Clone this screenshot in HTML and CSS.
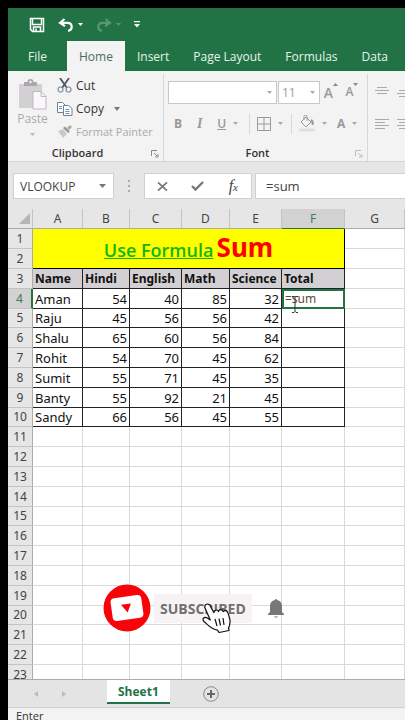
FILE: index.html
```html
<!DOCTYPE html>
<html lang="en">
<head>
  <meta charset="UTF-8">
  <meta name="viewport" content="width=device-width, initial-scale=1.0">
  <title>Sheet1</title>
  <link rel="stylesheet" href="styles.css">
</head>
<body>
  <div class="app">
    <header class="title-bar">
      <button class="quick" aria-label="Save">
        <svg width="16" height="16" viewBox="0 0 16 16" fill="none" stroke="#fff" stroke-width="1.5"><path d="M1.5 1.5h13v13h-11l-2-2z"/><path d="M3.5 2v5.500h9V2M4.500 14v-4h7v4"/><path d="M7 11.500v2.500"/></svg>
      </button>
      <button class="quick" aria-label="Undo">
        <svg width="16" height="14" viewBox="0 0 16 14" fill="none" stroke="#fff" stroke-width="2.2"><path d="M6.500 1L2 4.800l5 3.400M2.500 4.800h7c5.500 0 5.500 7 .5 8"/></svg>
        <svg class="caret" width="5" height="3" viewBox="0 0 5 3" fill="#fff"><path d="M0 0h5L2.500 3z"/></svg>
      </button>
      <button class="quick faded" aria-label="Redo">
        <svg width="16" height="14" viewBox="0 0 16 14" fill="none" stroke="#fff" stroke-width="2.2"><path d="M9.500 1L14 4.800l-5 3.400M13.500 4.800h-7c-5.500 0-5.500 7-.5 8"/></svg>
        <svg class="caret" width="5" height="3" viewBox="0 0 5 3" fill="#fff"><path d="M0 0h5L2.500 3z"/></svg>
      </button>
      <button class="quick" aria-label="Customize toolbar">
        <svg width="6" height="7" viewBox="0 0 6 7" fill="#fff"><path d="M0 0h6v1.200H0zM0 3h6L3 6.500z"/></svg>
      </button>
    </header>

    <nav class="tabs">
      <button class="tab file">File</button>
      <button class="tab active">Home</button>
      <button class="tab">Insert</button>
      <button class="tab">Page Layout</button>
      <button class="tab">Formulas</button>
      <button class="tab">Data</button>
    </nav>

    <section class="ribbon">
      <div class="group clipboard">
        <div class="group-body">
          <button class="paste">
            <svg width="30" height="31" viewBox="0 0 30 31"><path d="M1 5h23v24H1z" fill="#d3d0d3"/><path d="M6 3h3.500a3 3 0 0 1 6 0H19v4H6z" fill="#aaa7aa"/><circle cx="12.500" cy="3" r="1.200" fill="#f3f3f3"/><path d="M15 12.500h8l5 5V30H15z" fill="#fbf8fb" stroke="#bdb9bd"/><path d="M23 12.500v5h5" fill="none" stroke="#bdb9bd"/></svg>
            <span>Paste</span>
            <svg width="5" height="3" viewBox="0 0 5 3" fill="#bbb"><path d="M0 0h5L2.500 3z"/></svg>
          </button>
          <div class="clip-list">
            <button class="clip">
              <svg width="16" height="15" viewBox="0 0 16 15" fill="none"><path d="M3 0l7 10M12 0L5 10" stroke="#555" stroke-width="1.8"/><circle cx="3.500" cy="11.500" r="2.500" stroke="#7990a8" stroke-width="1.2"/><circle cx="11.500" cy="11.500" r="2.500" stroke="#7990a8" stroke-width="1.2"/></svg>
              <span>Cut</span>
            </button>
            <button class="clip">
              <svg width="16" height="15" viewBox="0 0 16 15" fill="#fff" stroke="#71808f"><path d="M.5 1.500h5l3 3v7h-8z"/><path d="M6.500 4.500h5l3.500 3v7H6.500z"/><path d="M2 5.500h3M2 7.500h3M8.500 8.500h4M8.500 10.500h4M8.500 12.500h4" stroke="#6a8fb5"/></svg>
              <span>Copy</span>
              <svg class="after" width="6" height="4" viewBox="0 0 6 4" fill="#777"><path d="M0 0h6L3 4z"/></svg>
            </button>
            <button class="clip off">
              <svg width="16" height="15" viewBox="0 0 16 15"><path d="M1 7l5-2 4 5-4 4z" fill="#cbc9cb"/><path d="M6 4l2-1.500 5 5L11 9z" fill="#999"/><path d="M10 4l3-3 2 2-3 3z" fill="#aaa"/></svg>
              <span>Format Painter</span>
            </button>
          </div>
        </div>
        <div class="group-label">Clipboard
          <svg class="launcher" width="8" height="8" viewBox="0 0 8 8" fill="none" stroke="#888"><path d="M.5 6V.5H6M3 3l3 3M7 4v3H4"/></svg>
        </div>
      </div>

      <div class="group font">
        <div class="group-body rows">
          <div class="tools boxes">
            <span class="pick wide">
              <select aria-label="Font name"><option></option></select>
              <svg width="5" height="3" viewBox="0 0 5 3" fill="#aaa"><path d="M0 0h5L2.500 3z"/></svg>
            </span>
            <span class="pick">
              <select aria-label="Font size"><option>11</option></select>
              <svg width="5" height="3" viewBox="0 0 5 3" fill="#aaa"><path d="M0 0h5L2.500 3z"/></svg>
            </span>
            <button class="tool" aria-label="Increase font size"><span class="grow">A</span><svg width="5" height="3" viewBox="0 0 5 3" fill="#888"><path d="M0 3h5L2.500 0z"/></svg></button>
            <button class="tool" aria-label="Decrease font size"><span>A</span><svg width="5" height="3" viewBox="0 0 5 3" fill="#888"><path d="M0 0h5L2.500 3z"/></svg></button>
          </div>
          <div class="tools">
            <button class="tool"><b>B</b></button>
            <button class="tool"><i>I</i></button>
            <button class="tool split"><u>U</u><svg width="5" height="3" viewBox="0 0 5 3" fill="#aaa"><path d="M0 0h5L2.500 3z"/></svg></button>
            <span class="rule"></span>
            <button class="tool split" aria-label="Borders"><svg width="14" height="14" viewBox="0 0 14 14" fill="none" stroke="#999"><path d="M.5.5h13v13H.5zM7 0v14M0 7h14"/></svg><svg width="5" height="3" viewBox="0 0 5 3" fill="#aaa"><path d="M0 0h5L2.500 3z"/></svg></button>
            <span class="rule"></span>
            <button class="tool split" aria-label="Fill color"><svg width="16" height="17" viewBox="0 0 16 17" fill="none" stroke="#999"><path d="M2 7l5-5 5 5-5 5zM5 5V1.500a1.500 1.500 0 0 1 3 0V6"/><path d="M12 5c2 1 2 3 1.500 5" stroke-width="2"/><path d="M0 15h16" stroke="#e3dfe1" stroke-width="3"/></svg><svg width="5" height="3" viewBox="0 0 5 3" fill="#aaa"><path d="M0 0h5L2.500 3z"/></svg></button>
            <button class="tool split" aria-label="Font color"><b>A</b><svg width="5" height="3" viewBox="0 0 5 3" fill="#aaa"><path d="M0 0h5L2.500 3z"/></svg></button>
          </div>
        </div>
        <div class="group-label">Font
          <svg class="launcher" width="8" height="8" viewBox="0 0 8 8" fill="none" stroke="#bbb"><path d="M.5 6V.5H6M3 3l3 3M7 4v3H4"/></svg>
        </div>
      </div>

      <div class="group align">
        <div class="group-body rows">
          <div class="tools">
            <button class="tool" aria-label="Top align"><svg width="14" height="14" viewBox="0 0 14 14" stroke="#aaa"><path d="M2 1.500h10M0 4.500h14M2 7.500h10"/></svg></button>
            <button class="tool" aria-label="Middle align"><svg width="14" height="14" viewBox="0 0 14 14" stroke="#aaa"><path d="M2 4.500h10M0 7.500h14M2 10.500h10"/></svg></button>
          </div>
          <div class="tools">
            <button class="tool" aria-label="Align left"><svg width="14" height="14" viewBox="0 0 14 14" stroke="#aaa"><path d="M0 2.500h14M0 5.500h10M0 8.500h14M0 11.500h10"/></svg></button>
            <button class="tool" aria-label="Center"><svg width="14" height="14" viewBox="0 0 14 14" stroke="#aaa"><path d="M0 2.500h14M2 5.500h10M0 8.500h14M2 11.500h10"/></svg></button>
          </div>
        </div>
      </div>
    </section>

    <section class="formula-bar">
      <div class="name-box">
        <input type="text" value="VLOOKUP" aria-label="Name box">
        <svg width="7" height="4" viewBox="0 0 7 4" fill="#777"><path d="M0 0h7L3.500 4z"/></svg>
      </div>
      <svg class="grip" width="2" height="12" viewBox="0 0 2 12" fill="#aaa"><path d="M0 0h2v2H0zM0 5h2v2H0zM0 10h2v2H0z"/></svg>
      <div class="entry">
        <button aria-label="Cancel"><svg width="11" height="9" viewBox="0 0 12 10" fill="none" stroke="#777" stroke-width="2"><path d="M1 .5l10 9M11 .5l-10 9"/></svg></button>
        <button aria-label="Enter"><svg width="13" height="10" viewBox="0 0 13 10" fill="none" stroke="#777" stroke-width="2.400"><path d="M1 5l3.500 3.500L12 1"/></svg></button>
        <button aria-label="Insert function"><i class="fx">f<small>x</small></i></button>
      </div>
      <input class="formula" type="text" value="=sum" aria-label="Formula">
    </section>

    <main class="sheet">
      <table id="grid">
        <colgroup>
          <col class="col-num"><col class="col-a"><col class="col-b"><col class="col-c"><col class="col-d"><col class="col-e"><col class="col-f"><col>
        </colgroup>
        <thead>
          <tr>
            <th class="corner"><svg width="11" height="11" viewBox="0 0 11 11" fill="#b5b5b5"><path d="M11 0v11H0z"/></svg></th>
            <th>A</th><th>B</th><th>C</th><th>D</th><th>E</th><th class="picked">F</th><th>G</th>
          </tr>
        </thead>
        <tbody>
          <tr><th>1</th><td class="banner" colspan="6" rowspan="2"><span class="use">Use Formula</span> <span class="sum">Sum</span></td><td></td></tr>
          <tr><th>2</th><td></td></tr>
          <tr class="heads"><th>3</th><td>Name</td><td>Hindi</td><td>English</td><td>Math</td><td>Science</td><td>Total</td><td></td></tr>
          <tr class="data"><th class="picked">4</th><td>Aman</td><td>54</td><td>40</td><td>85</td><td>32</td><td class="editing"><input type="text" value="=sum" aria-label="F4"></td><td></td></tr>
          <tr class="data"><th>5</th><td>Raju</td><td>45</td><td>56</td><td>56</td><td>42</td><td></td><td></td></tr>
          <tr class="data"><th>6</th><td>Shalu</td><td>65</td><td>60</td><td>56</td><td>84</td><td></td><td></td></tr>
          <tr class="data"><th>7</th><td>Rohit</td><td>54</td><td>70</td><td>45</td><td>62</td><td></td><td></td></tr>
          <tr class="data"><th>8</th><td>Sumit</td><td>55</td><td>71</td><td>45</td><td>35</td><td></td><td></td></tr>
          <tr class="data"><th>9</th><td>Banty</td><td>55</td><td>92</td><td>21</td><td>45</td><td></td><td></td></tr>
          <tr class="data"><th>10</th><td>Sandy</td><td>66</td><td>56</td><td>45</td><td>55</td><td></td><td></td></tr>
          <!-- Empty rows are added below -->
        </tbody>
      </table>

      <svg class="beam" width="8" height="17" viewBox="0 0 8 17" fill="none" stroke="#333"><path d="M1 .5h2l1 1 1-1h2M4 1.500v14M1 16.500h2l1-1 1 1h2"/></svg>

      <div class="subscribe">
        <svg width="48" height="48" viewBox="0 0 48 48"><circle cx="24" cy="24" r="23.500" fill="#f80308"/><g transform="rotate(-8 24 24)"><rect x="8.500" y="12.500" width="31" height="23" rx="4" fill="#fff"/><path d="M18.500 20h10L24 28.500z" fill="#f80308"/></g></svg>
        <button class="sub-button">SUBSCRIBED</button>
        <svg width="16" height="20" viewBox="0 0 16 20" fill="#777"><path d="M7 2a1 1 0 0 1 2 0c3.500.7 5 3 5 6.500V14l2 2v1H0v-1l2-2V8.500C2 5 3.500 2.700 7 2zM6 18.500h4c-.5 1.500-3.500 1.500-4 0z"/></svg>
        <svg class="hand" width="30" height="31" viewBox="0 0 30 31" fill="#fff" stroke="#111" stroke-width="1.2" stroke-linejoin="round"><path d="M4 1.500c2-1.200 3.500 0 4.300 1.600l3.700 6.500c0-3 3.700-3.500 4.500-1 .5-2.600 4-2.600 4.700 0 1.500-2 4-1 4.800 1.500 1.500 4.500 3.500 8.500.5 15l.5 2.400-10 2-1.500-2.300C10 26.500 7 23 2 18.500c-2.500-3 .5-5 3.300-3.500l3 2L3.200 5.500C2.500 4 2.800 2.300 4 1.500z"/><path d="M13 16l2 7M17 15.500l1.500 7M21 15l1 7" fill="none"/></svg>
      </div>
    </main>

    <div class="sheet-bar">
      <button class="arrow" aria-label="Previous sheet"><svg width="4" height="6" viewBox="0 0 4 6" fill="#bbb"><path d="M4 0v6L0 3z"/></svg></button>
      <button class="arrow" aria-label="Next sheet"><svg width="4" height="6" viewBox="0 0 4 6" fill="#bbb"><path d="M0 0v6l4-3z"/></svg></button>
      <button class="sheet-tab">Sheet1</button>
      <button class="add" aria-label="New sheet"><svg width="16" height="16" viewBox="0 0 16 16" fill="none" stroke="#888"><circle cx="8" cy="8" r="7.300"/><path d="M8 4v8M4 8h8" stroke="#666" stroke-width="2"/></svg></button>
    </div>
    <footer class="status">Enter</footer>
  </div>

  <script>
    const tableBody = document.querySelector("#grid tbody");

    for (let row = 11; row <= 23; row++) {
      tableBody.insertAdjacentHTML("beforeend", `<tr><th>${row}</th>${"<td></td>".repeat(7)}</tr>`);
    }
  </script>
</body>
</html>
```

FILE: styles.css
```css
* {
  box-sizing: border-box;
}
body {
  margin: 0;
  background: #000000;
  font-family: "Open Sans", "Noto Sans", sans-serif;
  font-size: 12px;
  color: #444444;
}
button, input, select {
  font: inherit;
  color: inherit;
  background: none;
  border: 0;
  padding: 0;
  margin: 0;
  outline: 0;
}
svg {
  display: block;
  flex: none;
}
.app {
  display: flex;
  flex-direction: column;
  height: 100vh;
  padding: 8px 0 0 8px;
  overflow: hidden;
}

/* title bar and tabs */
.title-bar {
  display: flex;
  align-items: center;
  gap: 13px;
  height: 33px;
  padding-left: 21px;
  background: #217346;
  flex: none;
}
.quick {
  display: flex;
  align-items: center;
  gap: 4px;
}
.faded {
  opacity: 0.25;
}
.tabs {
  display: flex;
  height: 30px;
  padding-left: 8px;
  background: #217346;
  flex: none;
  overflow: hidden;
}
.tab {
  padding: 0 12px;
  color: #e8f3ec;
  white-space: nowrap;
}
.tab.file {
  margin-right: 8px;
}
.tab.active {
  background: #f3f3f3;
  color: #44705a;
}

/* ribbon */
.ribbon {
  display: flex;
  height: 91px;
  background: #f3f3f3;
  border-bottom: 1px solid #d5d5d5;
  flex: none;
  overflow: hidden;
}
.group {
  display: flex;
  flex-direction: column;
  flex: none;
  margin-top: 3px;
  border-right: 1px solid #d8d8d8;
}
.clipboard {
  width: 156px;
}
.font {
  width: 204px;
}
.align {
  border: 0;
}
.group-body {
  display: flex;
  flex: 1;
}
.group-label {
  position: relative;
  height: 15px;
  line-height: 14px;
  font-size: 11px;
  font-weight: 600;
  color: #333333;
  text-align: center;
  padding-right: 16px;
}
.launcher {
  position: absolute;
  right: 4px;
  top: 4px;
}
.paste {
  display: flex;
  flex-direction: column;
  align-items: center;
  width: 49px;
  padding-top: 5px;
  color: #aaaaaa;
}
.paste span {
  line-height: 18px;
  margin-bottom: 5px;
}
.clip-list {
  display: flex;
  flex-direction: column;
  color: #333333;
}
.clip {
  display: flex;
  align-items: center;
  gap: 3px;
  height: 23px;
  white-space: nowrap;
}
.clip.off {
  color: #aaaaaa;
  font-size: 11px;
}
.after {
  margin-left: 7px;
}
.rows {
  flex-direction: column;
  gap: 8px;
  padding: 7px 4px 0;
}
.tools {
  display: flex;
  align-items: center;
  gap: 2px;
  height: 23px;
  color: #999999;
}
.boxes {
  gap: 1px;
}
.pick {
  display: flex;
  align-items: center;
  width: 42px;
  height: 23px;
  padding-right: 4px;
  background: #ffffff;
  border: 1px solid #c8c8c8;
}
.pick.wide {
  width: 109px;
}
.pick select {
  appearance: none;
  flex: 1;
  min-width: 0;
  padding-left: 3px;
  color: #8fa393;
}
.tool {
  display: flex;
  align-items: center;
  justify-content: center;
  width: 20px;
  height: 20px;
}
.boxes .tool {
  align-items: flex-start;
  font-weight: 600;
}
.grow {
  font-size: 14px;
}
.split {
  width: 32px;
  gap: 7px;
}
.rule {
  width: 1px;
  height: 20px;
  margin: 0 3px;
  background: #d8d8d8;
}
u {
  font-weight: 600;
}
i {
  font-family: "Liberation Serif", serif;
  font-size: 14px;
  font-weight: bold;
}

/* formula bar */
.formula-bar {
  display: flex;
  align-items: center;
  height: 47px;
  padding: 11px 0 10px 5px;
  background: #e6e6e6;
  flex: none;
}
.name-box {
  display: flex;
  align-items: center;
  width: 101px;
  height: 26px;
  padding: 0 7px 0 6px;
  background: #ffffff;
  border: 1px solid #d0d0d0;
}
.name-box input {
  flex: 1;
  min-width: 0;
}
.grip {
  margin: 0 14px;
}
.entry {
  display: flex;
  width: 108px;
  height: 26px;
  background: #ffffff;
  border: 1px solid #d0d0d0;
}
.entry button {
  display: flex;
  flex: 1;
  align-items: center;
  justify-content: center;
}
.fx {
  font-size: 16px;
  font-weight: normal;
}
.fx small {
  font-size: 11px;
}
.formula {
  flex: 1;
  min-width: 0;
  height: 26px;
  margin-left: 3px;
  padding-left: 10px;
  font-size: 13px;
  background: #ffffff;
  border: 1px solid #d0d0d0;
  border-right: 0;
}

/* grid */
.sheet {
  position: relative;
  flex: 1;
  min-height: 0;
  overflow: hidden;
  background: #ffffff;
}
table {
  width: 100%;
  table-layout: fixed;
  border-collapse: separate;
  border-spacing: 0;
  font-family: "Noto Sans", sans-serif;
}
.col-num { width: 25px; }
.col-a { width: 50px; }
.col-b { width: 47px; }
.col-c { width: 52px; }
.col-d { width: 48px; }
.col-e { width: 52px; }
.col-f { width: 63px; }
th, td {
  height: 20px;
  padding: 0 2px;
  line-height: 18px;
  border-right: 1px solid #d9d9d9;
  border-bottom: 1px solid #d9d9d9;
  white-space: nowrap;
  overflow: hidden;
}
tbody tr:nth-child(5n) > * {
  height: 19px;
}
th {
  padding: 0;
  font-weight: normal;
  background: #e6e6e6;
  border-color: #c4c4c4;
}
thead th {
  border-bottom-color: #ababab;
}
tbody th {
  border-right-color: #ababab;
}
.corner svg {
  margin-left: 11px;
}
th.picked {
  background: #d2d2d2;
  color: #3f7a5b;
}
thead .picked {
  border-bottom: 1px solid #217346;
}
tbody .picked {
  border-right: 2px solid #217346;
}
.banner {
  padding-top: 3px;
  line-height: 28px;
  background: #ffff00;
  text-align: center;
  font-weight: bold;
  border-color: #000000;
}
.use {
  font-family: "Open Sans", sans-serif;
  font-size: 18px;
  font-weight: 600;
  color: #12b512;
  text-decoration: underline;
}
.sum {
  font-size: 26px;
  color: #ff0000;
}
.heads td, .data td {
  color: #111111;
  border-color: #222222;
}
.heads td {
  font-weight: bold;
  background: #d2d0d2;
}
.data td {
  font-size: 13px;
  text-align: right;
}
.data td:nth-child(2) {
  text-align: left;
}
.heads td:last-child, .data td:last-child {
  background: #ffffff;
  border-color: #d9d9d9;
}
.data .editing {
  border: 2px solid #217346;
  padding: 0 1px;
}
.editing input {
  display: block;
  width: 100%;
  height: 16px;
  font-size: 12px;
  color: #5b4a35;
}
.beam {
  position: absolute;
  left: 283px;
  top: 87px;
}

/* subscribe overlay */
.subscribe {
  position: absolute;
  left: 95px;
  bottom: 47px;
  display: flex;
  align-items: center;
}
.sub-button {
  height: 29px;
  margin: 0 16px 0 3px;
  padding: 0 6px;
  background: #f7f2f3;
  color: #707070;
  font-size: 14px;
  font-weight: bold;
}
.hand {
  position: absolute;
  left: 99px;
  top: 19px;
}

/* sheet tabs and status */
.sheet-bar {
  display: flex;
  align-items: center;
  height: 28px;
  padding-left: 14px;
  background: #e4e4e4;
  border-top: 1px solid #ababab;
  flex: none;
}
.arrow {
  display: flex;
  justify-content: center;
  width: 28px;
}
.sheet-tab {
  align-self: flex-start;
  height: 24px;
  margin: 0 33px 0 29px;
  padding: 0 11px;
  background: #ffffff;
  border-bottom: 2px solid #217346;
  color: #217346;
  font-weight: bold;
}
.status {
  height: 13px;
  padding-left: 8px;
  line-height: 16px;
  font-size: 11px;
  color: #333333;
  background: #f3f3f3;
  border-top: 1px solid #d0d0d0;
  overflow: hidden;
  flex: none;
}
```
